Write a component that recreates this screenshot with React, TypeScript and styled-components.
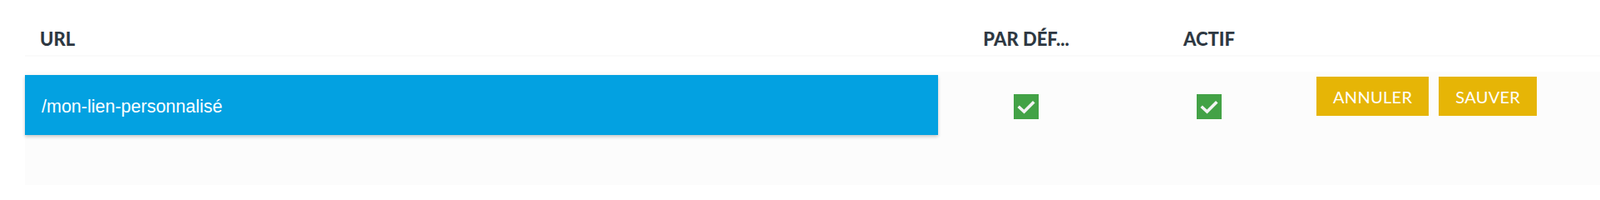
import React from "react";
import styled, { createGlobalStyle } from "styled-components";

const GlobalStyle = createGlobalStyle`
  html, body {
    margin: 0;
    padding: 0;
    background: #ffffff;
  }
  body {
    font-family: Lato, "Open Sans", sans-serif;
    overflow: hidden;
  }
`;

const COLUMNS = "1098px 212px 228px 1fr";

const Table = styled.div`
  padding-left: 30px;
  width: 1894px;
`;

const HeaderRow = styled.div`
  display: grid;
  grid-template-columns: ${COLUMNS};
  height: 68px;
  box-sizing: border-box;
  padding-top: 34px;
  border-bottom: 2px solid #fafafa;
  margin-bottom: 18px;
`;

const HeaderCell = styled.div<{ $center?: boolean }>`
  font-family: Lato, sans-serif;
  font-weight: 900;
  font-size: 22px;
  line-height: 26px;
  color: #2e3842;
  text-transform: uppercase;
  padding-left: ${(p) => (p.$center ? "0" : "18px")};
  text-align: ${(p) => (p.$center ? "center" : "left")};
  white-space: nowrap;
`;

const BodyRow = styled.div`
  display: grid;
  grid-template-columns: ${COLUMNS};
  align-items: start;
  height: 136px;
  background: #fcfcfc;
`;

const UrlInput = styled.div`
  margin-top: 4px;
  height: 72px;
  box-sizing: border-box;
  padding: 4px 20px 0;
  display: flex;
  align-items: center;
  background: #03a1e1;
  color: #ffffff;
  font-family: "Liberation Sans", Arial, sans-serif;
  font-size: 21.5px;
  box-shadow: 0 2px 4px rgba(0, 0, 0, 0.22);
`;

const CheckCell = styled.div`
  display: flex;
  justify-content: center;
  padding-top: 27px;
`;

const CheckBox = styled.span`
  width: 30px;
  height: 30px;
  background: #43a246;
  display: flex;
  align-items: center;
  justify-content: center;
`;

const Actions = styled.div`
  display: flex;
  gap: 12px;
  padding: 6px 0 0 15px;
`;

const ActionButton = styled.button`
  height: 47px;
  padding: 0 20px;
  border: none;
  border-radius: 0;
  background: #e6b506;
  color: #ffffff;
  font-family: Lato, sans-serif;
  font-size: 20px;
  font-weight: 400;
  letter-spacing: 0.3px;
  text-transform: uppercase;
  cursor: pointer;
`;

function Check() {
  return (
    <CheckBox>
      <svg width="30" height="30" viewBox="0 0 30 30">
        <path
          d="M7 16 L12.5 21 L23 10.5"
          fill="none"
          stroke="#f4f4f4"
          strokeWidth="3.6"
          strokeLinecap="square"
        />
      </svg>
    </CheckBox>
  );
}

export default function App() {
  return (
    <>
      <GlobalStyle />
      <Table>
        <HeaderRow>
          <HeaderCell>URL</HeaderCell>
          <HeaderCell $center>Par déf...</HeaderCell>
          <HeaderCell $center>Actif</HeaderCell>
          <HeaderCell />
        </HeaderRow>
        <BodyRow>
          <UrlInput>/mon-lien-personnalisé</UrlInput>
          <CheckCell>
            <Check />
          </CheckCell>
          <CheckCell>
            <Check />
          </CheckCell>
          <Actions>
            <ActionButton>Annuler</ActionButton>
            <ActionButton>Sauver</ActionButton>
          </Actions>
        </BodyRow>
      </Table>
    </>
  );
}
